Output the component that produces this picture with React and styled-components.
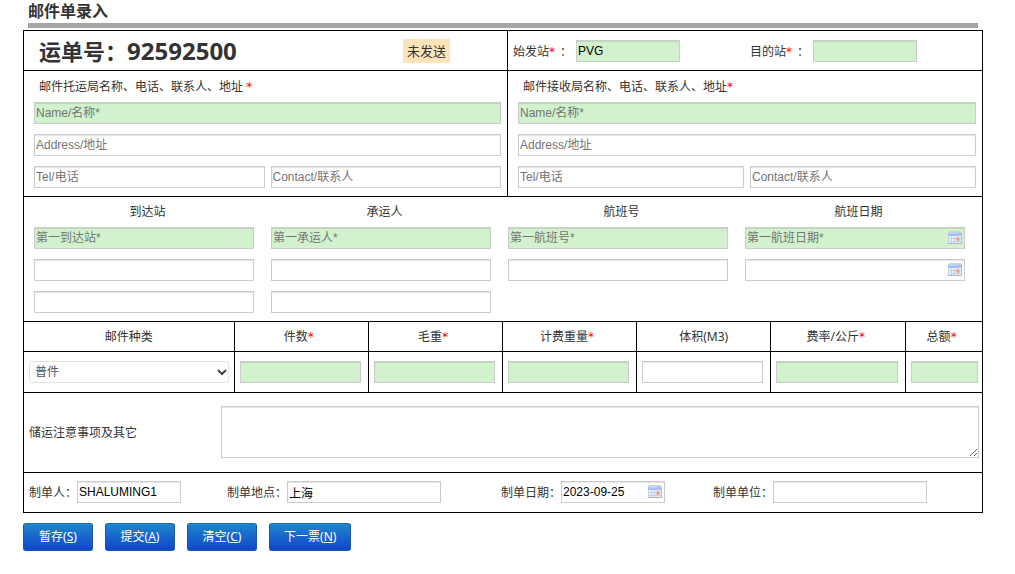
import React from "react";
import styled, { createGlobalStyle } from "styled-components";

const uiFont = '"Noto Sans", "Noto Sans CJK SC", sans-serif';
const fieldFont = '"Liberation Sans", "Noto Sans CJK SC", sans-serif';

const GlobalStyle = createGlobalStyle`
  *, *::before, *::after { box-sizing: border-box; }
  body {
    margin: 0;
    background: #fff;
    color: #333;
    font-family: ${uiFont};
    font-size: 12px;
  }
`;

const Page = styled.main`
  padding: 0 32px 20px 23px;
`;

const Title = styled.h1`
  margin: 0 5px 2px;
  padding-bottom: 1px;
  border-bottom: 5px solid #a6a6a6;
  font-size: 16px;
  line-height: 22px;
  font-weight: 700;
`;

const Sheet = styled.div`
  border: 1px solid #000;
`;

const Band = styled.section`
  border-bottom: 1px solid #000;
  &:last-child { border-bottom: 0; }
`;

const SplitBand = styled(Band)`
  display: grid;
  grid-template-columns: 484fr 474fr;
`;

const WaybillCell = styled.div`
  display: flex;
  align-items: center;
  justify-content: space-between;
  height: 39px;
  padding: 0 57px 0 15px;
  border-right: 1px solid #000;
`;

const Waybill = styled.h2`
  display: flex;
  align-items: center;
  margin: 0;
  font-size: 22px;
  line-height: 36px;
  font-weight: 700;
`;

const WaybillNumber = styled.span`
  font-size: 24px;
`;

const Status = styled.span`
  padding: 0 4px;
  background: #fde3b9;
  font-size: 13px;
  line-height: 24px;
`;

const Stations = styled.div`
  display: grid;
  grid-template-columns: 1fr 1fr;
`;

const StationField = styled.div`
  display: flex;
  align-items: center;
  gap: 4px;
  padding-left: 5px;
`;

const Star = styled.span`
  margin-right: 5px;
  color: #f00;
  font-family: "DejaVu Sans", sans-serif;
  line-height: 1;
`;

const Field = styled.input`
  display: block;
  width: ${(p) => p.$width || "100%"};
  min-width: 0;
  height: 22px;
  margin: 0;
  padding: 0 1px;
  border: 1px solid #ccc;
  border-radius: 0;
  background: ${(p) => (p.$required ? "#d1f2cd" : "#fff")};
  box-shadow: inset 0 1px 1px rgba(0, 0, 0, 0.1);
  color: #000;
  font-family: ${fieldFont};
  font-size: 12px;
  outline: 0;
  &::placeholder { color: #757575; opacity: 1; }
`;

const Party = styled.div`
  display: flex;
  flex-direction: column;
  gap: 10px;
  padding: 0 6px 8px 10px;
  border-right: ${(p) => (p.$divided ? "1px solid #000" : "0")};
`;

const PartyHeading = styled.h3`
  margin: 0 0 -10px;
  padding-left: 5px;
  font-size: 12px;
  line-height: 31px;
  font-weight: 400;
`;

const Pair = styled.div`
  display: grid;
  grid-template-columns: 1fr 1fr;
  gap: 6px;
`;

const Legs = styled(Band)`
  display: grid;
  grid-template-columns: repeat(4, 1fr);
  column-gap: 17px;
  padding: 0 17px 8px 10px;
`;

const LegColumn = styled.div`
  display: flex;
  flex-direction: column;
  gap: 10px;
`;

const LegHeading = styled.h3`
  margin: 0 0 -10px;
  padding-left: 7px;
  font-size: 12px;
  line-height: 30px;
  font-weight: 400;
  text-align: center;
`;

const DateBox = styled.div`
  position: relative;
  width: ${(p) => p.$width || "100%"};
`;

const PickerButton = styled.button`
  position: absolute;
  top: 4px;
  right: 3px;
  display: block;
  width: 14px;
  height: 14px;
  padding: 0;
  border: 0;
  background: none;
  cursor: pointer;
  svg { display: block; }
`;

const CargoTable = styled.table`
  width: 100%;
  table-layout: fixed;
  border-spacing: 0;
  font-size: 12px;
`;

const CargoHead = styled.th`
  width: ${(p) => p.$width || "auto"};
  height: 30px;
  padding: 0;
  border-right: 1px solid #000;
  border-bottom: 1px solid #000;
  font-weight: 400;
  line-height: 20px;
  text-align: center;
  &:last-child { border-right: 0; }
`;

const CargoCell = styled.td`
  height: 40px;
  padding: 9px 7px 9px 5px;
  border-right: 1px solid #000;
  &:first-child { padding-right: 5px; }
  &:last-child { padding-right: 4px; border-right: 0; }
`;

const SelectBox = styled.div`
  position: relative;
  svg {
    position: absolute;
    top: 7px;
    right: 2px;
    pointer-events: none;
  }
`;

const Select = styled.select`
  display: block;
  width: 100%;
  height: 22px;
  padding: 0 16px 0 5px;
  appearance: none;
  border: 1px solid #e3e3e3;
  border-radius: 3px;
  background: #fff;
  color: #555;
  font-family: ${fieldFont};
  font-size: 12px;
`;

const Remarks = styled(Band)`
  display: grid;
  grid-template-columns: 192px 1fr;
  align-items: center;
  padding: 13px 3px 14px 5px;
`;

const RemarksInput = styled.textarea`
  display: block;
  width: 100%;
  height: 52px;
  padding: 1px;
  border: 1px solid #ccc;
  box-shadow: inset 0 1px 1px rgba(0, 0, 0, 0.1);
  font-family: ${fieldFont};
  font-size: 12px;
  outline: 0;
`;

const Issue = styled(Band)`
  display: grid;
  grid-template-columns: 198fr 274fr 212fr 269fr;
  padding: 8px 0 9px 5px;
`;

const IssueField = styled.div`
  display: flex;
  align-items: center;
  label { flex: none; }
`;

const Actions = styled.div`
  display: flex;
  gap: 12px;
  margin-top: 10px;
`;

const ActionButton = styled.button`
  min-width: 70px;
  height: 28px;
  padding: 0 14px;
  border: 1px solid #1557b0;
  border-top-color: #1a70b0;
  border-radius: 3px;
  background: linear-gradient(#1f88cc, #1143cb) border-box;
  color: #fff;
  font-family: ${uiFont};
  font-size: 12px;
  line-height: 26px;
  white-space: nowrap;
  cursor: pointer;
`;

function CalendarIcon() {
  return (
    <svg width="14" height="14" viewBox="0 0 14 14" aria-hidden="true">
      <rect x="1" y="0" width="12" height="2" fill="#d3d1cf" />
      <rect x="0" y="1" width="14" height="12" fill="#c9d3e6" />
      <rect x="0" y="2" width="14" height="3" fill="#a5c0f3" />
      <rect x="1" y="2" width="8" height="1" fill="#bdd0f7" />
      <rect x="1" y="5" width="12" height="7" fill="#eef4fd" />
      <path d="M3.5 5v7M6.5 5v7M9.5 5v7M1 7.5h12M1 10.5h12" stroke="#c0d0ea" fill="none" />
      <rect x="8" y="6" width="4" height="4" fill="#f3c0b2" />
      <rect x="9" y="7" width="2" height="2" fill="#eb9a84" />
      <rect x="0" y="12" width="14" height="1" fill="#aeb4c2" />
      <rect x="13" y="5" width="1" height="8" fill="#b5bccb" />
    </svg>
  );
}

function DateField({ width, label, ...rest }) {
  return (
    <DateBox $width={width}>
      <Field type="text" aria-label={label} {...rest} />
      <PickerButton type="button" aria-label="选择日期">
        <CalendarIcon />
      </PickerButton>
    </DateBox>
  );
}

function PartyForm({ title, divided }) {
  return (
    <Party $divided={divided}>
      <PartyHeading>
        {title}
        <Star>*</Star>
      </PartyHeading>
      <Field $required placeholder="Name/名称*" aria-label="Name/名称" />
      <Field placeholder="Address/地址" aria-label="Address/地址" />
      <Pair>
        <Field placeholder="Tel/电话" aria-label="Tel/电话" />
        <Field placeholder="Contact/联系人" aria-label="Contact/联系人" />
      </Pair>
    </Party>
  );
}

const legs = [
  { title: "到达站", first: "第一到达站*", extra: 2 },
  { title: "承运人", first: "第一承运人*", extra: 2 },
  { title: "航班号", first: "第一航班号*", extra: 1 },
  { title: "航班日期", first: "第一航班日期*", extra: 1, date: true },
];

const cargo = [
  { id: "pieces", title: "件数", required: true, width: "14%" },
  { id: "gross", title: "毛重", required: true, width: "14%" },
  { id: "chargeable", title: "计费重量", required: true, width: "14%" },
  { id: "volume", title: "体积(M3)", required: false, width: "14%" },
  { id: "rate", title: "费率/公斤", required: true, width: "14.1%" },
  { id: "total", title: "总额", required: true },
];

const actions = [
  { text: "暂存", accessKey: "S" },
  { text: "提交", accessKey: "A" },
  { text: "清空", accessKey: "C" },
  { text: "下一票", accessKey: "N" },
];

export default function App() {
  return (
    <Page>
      <GlobalStyle />
      <Title>邮件单录入</Title>
      <Sheet>
        <SplitBand>
          <WaybillCell>
            <Waybill>
              运单号：<WaybillNumber>92592500</WaybillNumber>
            </Waybill>
            <Status>未发送</Status>
          </WaybillCell>
          <Stations>
            <StationField>
              <label htmlFor="origin">始发站<Star>*</Star>：</label>
              <Field id="origin" $required $width="104px" defaultValue="PVG" />
            </StationField>
            <StationField>
              <label htmlFor="destination">目的站<Star>*</Star>：</label>
              <Field id="destination" $required $width="104px" />
            </StationField>
          </Stations>
        </SplitBand>

        <SplitBand>
          <PartyForm divided title="邮件托运局名称、电话、联系人、地址 " />
          <PartyForm title="邮件接收局名称、电话、联系人、地址" />
        </SplitBand>

        <Legs>
          {legs.map((leg) => {
            const Box = leg.date ? DateField : Field;
            return (
              <LegColumn key={leg.title}>
                <LegHeading>{leg.title}</LegHeading>
                <Box $required placeholder={leg.first} aria-label={leg.title} />
                {Array.from({ length: leg.extra }, (_, i) => (
                  <Box key={i} aria-label={`${leg.title} ${i + 2}`} />
                ))}
              </LegColumn>
            );
          })}
        </Legs>

        <Band>
          <CargoTable>
            <thead>
              <tr>
                <CargoHead $width="22%" scope="col">
                  <label htmlFor="kind">邮件种类</label>
                </CargoHead>
                {cargo.map((c) => (
                  <CargoHead key={c.id} $width={c.width} scope="col">
                    <label htmlFor={c.id}>
                      {c.title}
                      {c.required && <Star>*</Star>}
                    </label>
                  </CargoHead>
                ))}
              </tr>
            </thead>
            <tbody>
              <tr>
                <CargoCell>
                  <SelectBox>
                    <Select id="kind" defaultValue="普件">
                      <option>普件</option>
                    </Select>
                    <svg width="10" height="8" viewBox="0 0 10 8" aria-hidden="true">
                      <path d="M1 2l4 4 4-4" fill="none" stroke="#444" strokeWidth="2" />
                    </svg>
                  </SelectBox>
                </CargoCell>
                {cargo.map((c) => (
                  <CargoCell key={c.id}>
                    <Field id={c.id} $required={c.required} />
                  </CargoCell>
                ))}
              </tr>
            </tbody>
          </CargoTable>
        </Band>

        <Remarks>
          <label htmlFor="remarks">储运注意事项及其它</label>
          <RemarksInput id="remarks" />
        </Remarks>

        <Issue>
          <IssueField>
            <label htmlFor="issuer">制单人：</label>
            <Field id="issuer" $width="104px" defaultValue="SHALUMING1" />
          </IssueField>
          <IssueField>
            <label htmlFor="place">制单地点：</label>
            <Field id="place" $width="154px" defaultValue="上海" />
          </IssueField>
          <IssueField>
            <label htmlFor="issue-date">制单日期：</label>
            <DateField id="issue-date" width="104px" defaultValue="2023-09-25" />
          </IssueField>
          <IssueField>
            <label htmlFor="unit">制单单位：</label>
            <Field id="unit" $width="154px" />
          </IssueField>
        </Issue>
      </Sheet>

      <Actions>
        {actions.map((a) => (
          <ActionButton key={a.accessKey} type="button" accessKey={a.accessKey}>
            {a.text}(<u>{a.accessKey}</u>)
          </ActionButton>
        ))}
      </Actions>
    </Page>
  );
}
